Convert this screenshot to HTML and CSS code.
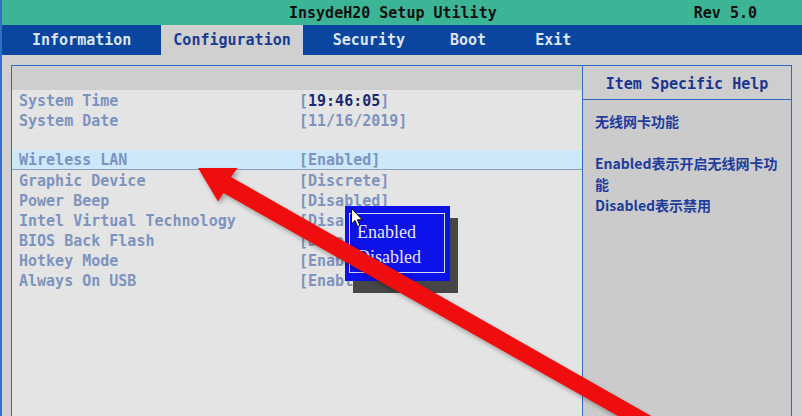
FILE: index.html
```html
<!DOCTYPE html>
<html>
<head>
<meta charset="utf-8">
<link rel="stylesheet" href="styles.css">
</head>
<body>
<div class="screen">
  <div class="titlebar">
    <span class="title">InsydeH20 Setup Utility</span>
    <span class="rev">Rev 5.0</span>
  </div>
  <div class="menubar">
    <span class="tab">Information</span>
    <span class="tab active">Configuration</span>
    <span class="tab">Security</span>
    <span class="tab tab-boot">Boot</span>
    <span class="tab tab-exit">Exit</span>
  </div>
  <div class="frame">
    <div class="settings">
      <div class="settings-head"></div>
      <div class="row"><span>System Time</span><span>[<b class="now">19:46:05</b>]</span></div>
      <div class="row"><span>System Date</span><span>[11/16/2019]</span></div>
      <div class="row"></div>
      <div class="row selected"><span>Wireless LAN</span><span>[Enabled]</span></div>
      <div class="row"><span>Graphic Device</span><span>[Discrete]</span></div>
      <div class="row"><span>Power Beep</span><span>[Disabled]</span></div>
      <div class="row"><span>Intel Virtual Technology</span><span>[Disabled]</span></div>
      <div class="row"><span>BIOS Back Flash</span><span>[Disabled]</span></div>
      <div class="row"><span>Hotkey Mode</span><span>[Enabled]</span></div>
      <div class="row"><span>Always On USB</span><span>[Enabled]</span></div>
    </div>
    <div class="help">
      <div class="help-head">Item Specific Help</div>
      <div class="help-body">
        <p>无线网卡功能</p>
        <p class="gap">Enabled表示开启无线网卡功能</p>
        <p>Disabled表示禁用</p>
      </div>
    </div>
  </div>

  <div class="popup">
    <div class="popup-inner">
      <div>Enabled</div>
      <div>Disabled</div>
    </div>
  </div>

  <svg class="cursor" width="13" height="20" viewBox="0 0 13 20">
    <path d="M0.5 0.5 L0.5 16 L4 12.6 L6.6 18.6 L9 17.6 L6.5 11.8 L11.4 11.8 Z" fill="#fff" stroke="#000" stroke-width="1" stroke-linejoin="round"/>
  </svg>

  <svg class="arrow" width="802" height="416" viewBox="0 0 802 416">
    <polygon points="198,168 237.5,168 231,177 741,467 733,481 223.5,193 218,201.5" fill="#f00d0d"/>
  </svg>
</div>
</body>
</html>
```

FILE: styles.css
```css
html, body {
  margin: 0;
  padding: 0;
}
body {
  width: 802px;
  height: 416px;
  overflow: hidden;
  background: #d0d0d0;
}
.screen {
  position: relative;
  width: 800px;
  height: 416px;
  overflow: hidden;
  border-left: 2px solid #2f6fc4;
  background: #d0d0d0;
  font-family: "DejaVu Sans Mono", "Liberation Mono", monospace;
  font-weight: bold;
  font-size: 15px;
}
.titlebar {
  height: 25px;
  background: #3cb596;
  color: #111;
  display: flex;
  align-items: center;
}
.title {
  margin-left: 287px;
}
.rev {
  margin-left: auto;
  margin-right: 45px;
}
.menubar {
  height: 30px;
  background: #0a459f;
  display: flex;
  align-items: stretch;
  padding-left: 18px;
  gap: 18px;
}
.tab {
  display: flex;
  align-items: center;
  padding: 0 12px;
  color: #dde5f0;
}
.tab.active {
  background: #d0d0d0;
  color: #1a3c90;
}
.tab-boot { margin-left: 3px; }
.tab-exit { margin-left: 7px; }

.frame {
  margin: 10px 0 0 9px;
  width: 779px;
  height: 360px;
  border: 1px solid #2f6cc4;
  display: grid;
  grid-template-columns: 570px 208px;
  column-gap: 1px;
  background: #2f6cc4;
}
.settings {
  background: #e4e4e4;
  color: #7d93be;
}
.settings-head {
  height: 24px;
  background: #cecece;
}
.row {
  height: 20px;
  box-sizing: border-box;
  display: grid;
  grid-template-columns: 280px 1fr;
  padding: 1px 0 0 7px;
  line-height: 20px;
}
.row.selected {
  background: #cce8fa;
  border-bottom: 1px solid #8d9dc2;
}
.row.selected span {
  line-height: 19px;
}
.now {
  color: #1b2a70;
}
.help {
  background: #cbcbcb;
}
.help-head {
  height: 34px;
  box-sizing: border-box;
  padding-top: 3px;
  border-bottom: 1px solid #2f6cc4;
  display: flex;
  align-items: center;
  justify-content: center;
  color: #1b3590;
  background: #cecece;
}
.help-body {
  padding: 11px 10px 0 12px;
  font-family: "Noto Sans CJK SC", "Noto Sans", sans-serif;
  font-weight: bold;
  font-size: 14px;
  line-height: 21px;
  color: #1f3d9c;
}
.help-body p {
  margin: 0;
}
.help-body p.gap {
  margin-top: 21px;
}

.popup {
  position: absolute;
  left: 343px;
  top: 206px;
  width: 105px;
  height: 75px;
  box-sizing: border-box;
  background: #0c12e8;
  box-shadow: 8px 12px 0 #464646;
  padding: 7px 5px 8px 4px;
}
.popup-inner {
  height: 100%;
  box-sizing: border-box;
  border: 1px solid #d8d8f0;
  padding: 6px 0 0 7px;
  font-family: "Liberation Serif", "DejaVu Serif", serif;
  font-weight: normal;
  font-size: 18px;
  line-height: 25px;
  color: #e6e6f6;
}
.cursor {
  position: absolute;
  left: 349px;
  top: 208px;
}
.arrow {
  position: absolute;
  left: -2px;
  top: 0;
  filter: drop-shadow(2px 3px 2px rgba(0,0,0,0.3));
}
```
